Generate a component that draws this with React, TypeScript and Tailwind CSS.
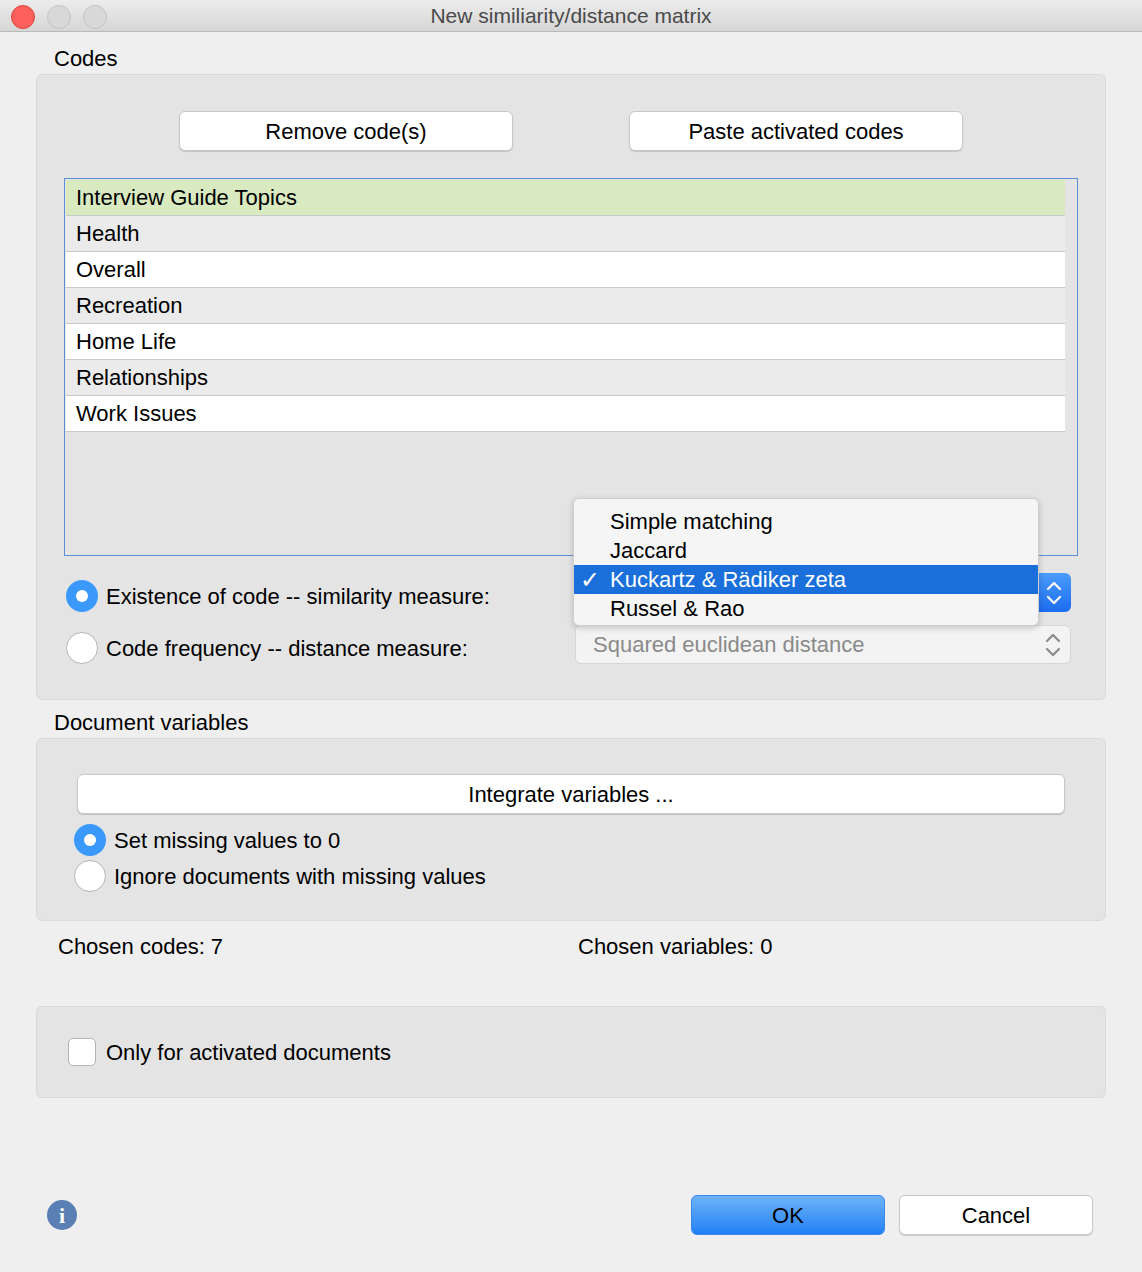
import React from "react";

const Radio = ({ on }: { on?: boolean }) =>
  on ? (
    <div className="w-[32px] h-[32px] rounded-full bg-[#3b99fc] flex items-center justify-center shrink-0">
      <div className="w-[12px] h-[12px] rounded-full bg-white" />
    </div>
  ) : (
    <div className="w-[32px] h-[32px] rounded-full bg-white border border-[#b5b5b5] shrink-0" />
  );

const Btn = ({ children, cls }: { children: React.ReactNode; cls: string }) => (
  <div className={`h-[40px] bg-white border border-[#c8c8c8] rounded-[6px] shadow-[0_1px_1px_rgba(0,0,0,0.15)] flex items-center justify-center text-[22px] text-black ${cls}`}>
    {children}
  </div>
);

const Arrows = ({ color }: { color: string }) => (
  <svg width="18" height="28" viewBox="0 0 18 28" fill="none" stroke={color} strokeWidth="2.2" strokeLinecap="round" strokeLinejoin="round">
    <path d="M3 10 L9 4 L15 10" />
    <path d="M3 18 L9 24 L15 18" />
  </svg>
);

export default function App() {
  const rows = [
    ["Interview Guide Topics", "bg-[#d9eac0]"],
    ["Health", "bg-[#ebebeb]"],
    ["Overall", "bg-white"],
    ["Recreation", "bg-[#ebebeb]"],
    ["Home Life", "bg-white"],
    ["Relationships", "bg-[#ebebeb]"],
    ["Work Issues", "bg-white"],
  ];
  return (
    <div className="w-[1142px] h-[1272px] bg-[#efefef] relative overflow-hidden text-black" style={{ fontFamily: '"Liberation Sans", Arial, sans-serif' }}>
      {/* title bar */}
      <div className="h-[32px] bg-gradient-to-b from-[#ececec] to-[#d6d6d6] border-b border-[#b9b9b9] relative flex items-center justify-center">
        <div className="absolute left-[11px] top-[5px] flex gap-[12px]">
          <div className="w-[24px] h-[24px] rounded-full bg-[#fc605c] border border-[#e0443e]" />
          <div className="w-[24px] h-[24px] rounded-full bg-[#d8d8d8] border border-[#c4c4c4]" />
          <div className="w-[24px] h-[24px] rounded-full bg-[#d8d8d8] border border-[#c4c4c4]" />
        </div>
        <span className="text-[21px] text-[#4a4a4a]">New similiarity/distance matrix</span>
      </div>

      <div className="px-[36px]">
        <div className="ml-[18px] mt-[13px] h-[28px] text-[22px] leading-[28px]">Codes</div>
        <div className="mt-[1px] h-[626px] bg-[#e4e4e4] border border-[#dadada] rounded-[6px] relative">
          <div className="flex mt-[36px] ml-[142px] gap-[116px]">
            <Btn cls="w-[334px]">Remove code(s)</Btn>
            <Btn cls="w-[334px]">Paste activated codes</Btn>
          </div>
          <div className="ml-[27px] mt-[27px] w-[1014px] h-[378px] border border-[#5d8fd6] bg-[#e4e4e4] pt-[1px] pl-[1px]">
            {rows.map(([t, c]) => (
              <div key={t} className={`w-[999px] h-[36px] ${c} border-b border-[#c9c9c9] flex items-center pl-[10px] text-[22px]`}>{t}</div>
            ))}
          </div>
          <div className="ml-[29px] mt-[24px] flex items-center gap-[8px] text-[22px] h-[32px]">
            <Radio on /> <span>Existence of code -- similarity measure:</span>
          </div>
          <div className="ml-[29px] mt-[20px] flex items-center gap-[8px] text-[22px] h-[32px]">
            <Radio /> <span>Code frequency -- distance measure:</span>
          </div>
          {/* blue select button edge */}
          <div className="absolute left-[1000px] top-[498px] w-[34px] h-[39px] rounded-r-[6px] bg-gradient-to-b from-[#4a9bfa] to-[#1c6cf0] flex items-center justify-center">
            <Arrows color="white" />
          </div>
          {/* squared select */}
          <div className="absolute left-[538px] top-[550px] w-[496px] h-[39px] rounded-[6px] bg-[#f3f3f3] border border-[#d6d6d6] flex items-center pl-[17px] pr-[8px] text-[22px] text-[#8a8a8a]">
            <span className="flex-1">Squared euclidean distance</span>
            <Arrows color="#8a8a8a" />
          </div>
          {/* dropdown menu */}
          <div className="absolute left-[536px] top-[423px] w-[466px] h-[128px] bg-[#f5f5f5] rounded-[6px] border border-[#cfcfcf] shadow-[0_2px_6px_rgba(0,0,0,0.2)] pt-[8px] text-[22px]">
            <div className="h-[29px] flex items-center pl-[36px]">Simple matching</div>
            <div className="h-[29px] flex items-center pl-[36px]">Jaccard</div>
            <div className="h-[29px] flex items-center bg-[#1a6fdb] text-white relative pl-[36px]">
              <span className="absolute left-[6px] text-[24px]">✓</span>Kuckartz &amp; Rädiker zeta
            </div>
            <div className="h-[29px] flex items-center pl-[36px]">Russel &amp; Rao</div>
          </div>
        </div>

        <div className="ml-[18px] mt-[9px] h-[28px] text-[22px] leading-[28px]">Document variables</div>
        <div className="mt-[1px] h-[183px] bg-[#e4e4e4] border border-[#dadada] rounded-[6px] pt-[35px] pl-[40px]">
          <Btn cls="w-[988px]">Integrate variables ...</Btn>
          <div className="mt-[10px] flex items-center gap-[8px] text-[22px] h-[32px] -ml-[3px]">
            <Radio on /> <span>Set missing values to 0</span>
          </div>
          <div className="mt-[4px] flex items-center gap-[8px] text-[22px] h-[32px] -ml-[3px]">
            <Radio /> <span>Ignore documents with missing values</span>
          </div>
        </div>

        <div className="flex mt-[12px] h-[28px] text-[22px] leading-[28px]">
          <div className="ml-[22px] w-[520px]">Chosen codes: 7</div>
          <div>Chosen variables: 0</div>
        </div>

        <div className="mt-[45px] h-[92px] bg-[#e4e4e4] border border-[#dadada] rounded-[6px] flex items-center pl-[31px] gap-[10px] text-[22px]">
          <div className="w-[28px] h-[28px] bg-white border border-[#b5b5b5] rounded-[5px]" />
          <span>Only for activated documents</span>
        </div>

        <div className="mt-[97px] flex items-center">
          <div className="ml-[11px] w-[30px] h-[30px] rounded-full bg-[#5a7fb5] text-white flex items-center justify-center font-bold text-[22px]" style={{ fontFamily: '"Liberation Serif", serif' }}>i</div>
          <div className="ml-[614px] w-[194px] h-[40px] rounded-[6px] bg-gradient-to-b from-[#6cb3fa] to-[#1f7ff4] border border-[#3d8ae8] flex items-center justify-center text-[22px]">OK</div>
          <div className="ml-[14px] w-[194px] h-[40px] rounded-[6px] bg-white border border-[#c8c8c8] shadow-[0_1px_1px_rgba(0,0,0,0.15)] flex items-center justify-center text-[22px]">Cancel</div>
        </div>
      </div>
    </div>
  );
}
